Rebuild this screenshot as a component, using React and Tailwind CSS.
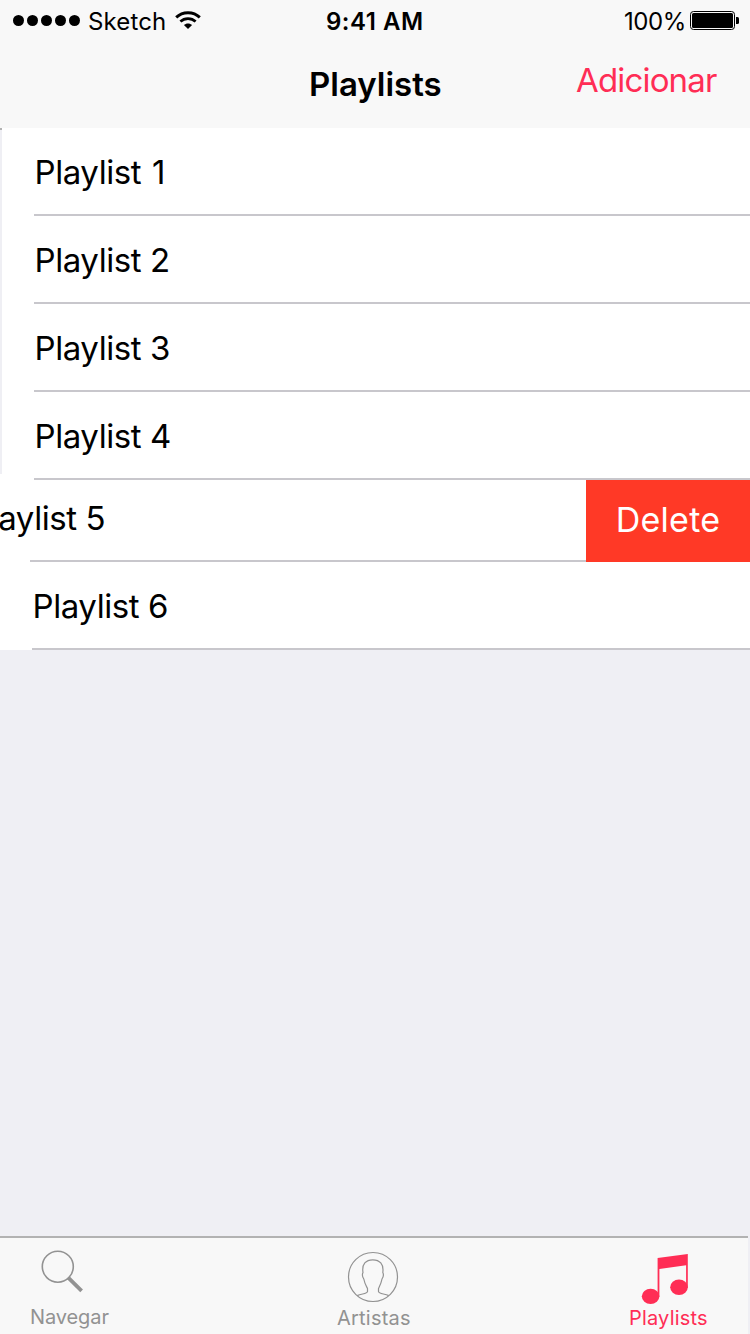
import React from 'react';

const playlists = [
  { name: 'Playlist 1', spacing: '[word-spacing:2px]' },
  { name: 'Playlist 2', spacing: '' },
  { name: 'Playlist 3', spacing: '' },
  { name: 'Playlist 4', spacing: '' },
];

function StatusBar() {
  return (
    <div className="flex h-10 pl-[13px] pr-[11px] text-2xl leading-[43px] whitespace-nowrap">
      <div className="flex w-[313px]">
        <div className="mt-[15px] flex h-[11px] gap-[3px]">
          <span className="size-[11px] rounded-full bg-black" />
          <span className="size-[11px] rounded-full bg-black" />
          <span className="size-[11px] rounded-full bg-black" />
          <span className="size-[11px] rounded-full bg-black" />
          <span className="size-[11px] rounded-full bg-black" />
        </div>
        <span className="ml-2 w-[87px] leading-[43px] tracking-[0.13px]">Sketch</span>
        <svg className="mt-[11px] h-[18px] w-[26px]" viewBox="0 0 26 18" fill="none">
          <path d="M1.2 6.4C7.6 .1 18.4 .1 24.8 6.4" stroke="#000" strokeWidth="2.9" />
          <path d="M5.4 10.6c4.2-4 11-4 15.2 0" stroke="#000" strokeWidth="2.7" />
          <path d="M8.9 14.1c2.3-2.3 5.9-2.3 8.2 0L13 18z" fill="#000" />
        </svg>
      </div>
      <span className="font-semibold tracking-[0.52px]">9:41 AM</span>
      <div className="ml-auto flex">
        <span className="w-[66px] tracking-[-0.4px]">100%</span>
        <div className="mt-[11px] h-[19px] w-[45px] rounded-[3.5px] border border-black p-px">
          <div className="h-full rounded-[1.5px] bg-black" />
        </div>
        <div className="mt-[17px] ml-px h-[7px] w-[3px] rounded-r-[1.5px] bg-black" />
      </div>
    </div>
  );
}

function TabIcon({ name }) {
  if (name === 'search')
    return (
      <svg className="ml-[10px] h-[54px] w-[46px]" viewBox="0 0 46 54" fill="none" stroke="#929292">
        <circle cx="17.8" cy="16.7" r="15.5" strokeWidth="1.6" />
        <path d="M28.2 27.6 41.6 40.8" strokeWidth="3.8" />
      </svg>
    );
  if (name === 'artist')
    return (
      <svg className="ml-[9px] h-[54px] w-[54px]" viewBox="0 0 54 54" fill="none" stroke="#929292" strokeWidth="1.2">
        <circle cx="27" cy="27" r="24.5" />
        <path d="M11.2 45.6C16 43.6 21 43.9 21.5 41.6V38.6C20 35.5 18.5 33 17.8 29C16.4 27 16.3 24 17 22.6C15.6 14 20 9.8 26.8 9.8S38 14 36.8 22.6C37.5 24 37.4 27 36 29C35.3 33 34 35.5 32.5 38.6V41.6C33 43.9 38 43.6 42.8 45.6" />
      </svg>
    );
  return (
    <svg className="ml-[12px] h-[54px] w-[50px]" viewBox="0 0 50 54" fill="#ff2d55">
      <path d="M16.6 8 46.8 4v33.5h-1.7V15.2L18.4 19v27.5h-1.8z" />
      <ellipse cx="9.6" cy="46.3" rx="8.8" ry="7.6" />
      <ellipse cx="38" cy="37.3" rx="8.8" ry="7.7" />
    </svg>
  );
}

export default function App() {
  return (
    <div className="flex h-[1334px] w-[750px] flex-col overflow-hidden bg-[#efeff4] font-['Inter',sans-serif] text-black">
      <header className="h-32 bg-[#f8f8f8]">
        <StatusBar />
        <nav className="flex h-[88px] text-[33px] whitespace-nowrap">
          <h1 className="ml-[309px] w-[267px] leading-[88px] font-semibold">Playlists</h1>
          <button className="h-20 leading-[80px] tracking-[-0.83px] text-[#ff2d55]">Adicionar</button>
        </nav>
      </header>

      <main className="h-[522px] bg-white text-[33px] tracking-[-0.42px] whitespace-nowrap">
        <div className="flex h-[352px]">
          <div className="h-[346px] w-0.5 border-t-2 border-[#b2b2b2] bg-[#efeff4]" />
          <ul className="ml-8 flex-1">
            {playlists.map(({ name, spacing }) => (
              <li key={name} className={`h-[88px] border-b-2 border-[#c8c7cc] pl-[0.5px] leading-[88px] ${spacing}`}>
                {name}
              </li>
            ))}
          </ul>
        </div>
        <div className="flex h-[82px]">
          <div className="w-[586px] overflow-hidden">
            <div className="-ml-[30px] h-20 leading-[76px]">Playlist 5</div>
            <div className="ml-[30px] h-0.5 bg-[#c8c7cc]" />
          </div>
          <button className="flex-1 bg-[#ff3926] text-[34px] leading-[79px] tracking-[0.26px] text-white">
            <span className="block pb-[3px]">Delete</span>
          </button>
        </div>
        <div className="ml-8 h-[88px] border-b-2 border-[#c8c7cc] pl-[0.5px] leading-[88px]">Playlist 6</div>
      </main>

      <footer className="mt-auto flex h-[98px] w-[748px] border-t-2 border-[#b2b2b2] bg-[#f8f8f8] text-xl leading-6 whitespace-nowrap text-[#929292]">
        <div className="ml-[30px] w-[298px] pt-3">
          <TabIcon name="search" />
          <div className="mt-px tracking-[-0.1px]">Navegar</div>
        </div>
        <div className="w-[300px] pt-3 pl-[9px]">
          <TabIcon name="artist" />
          <div className="mt-0.5 tracking-[0.22px]">Artistas</div>
        </div>
        <div className="pt-3 pl-px text-[#ff2d55]">
          <TabIcon name="music" />
          <div className="mt-0.5 tracking-[0.19px]">Playlists</div>
        </div>
      </footer>
    </div>
  );
}
